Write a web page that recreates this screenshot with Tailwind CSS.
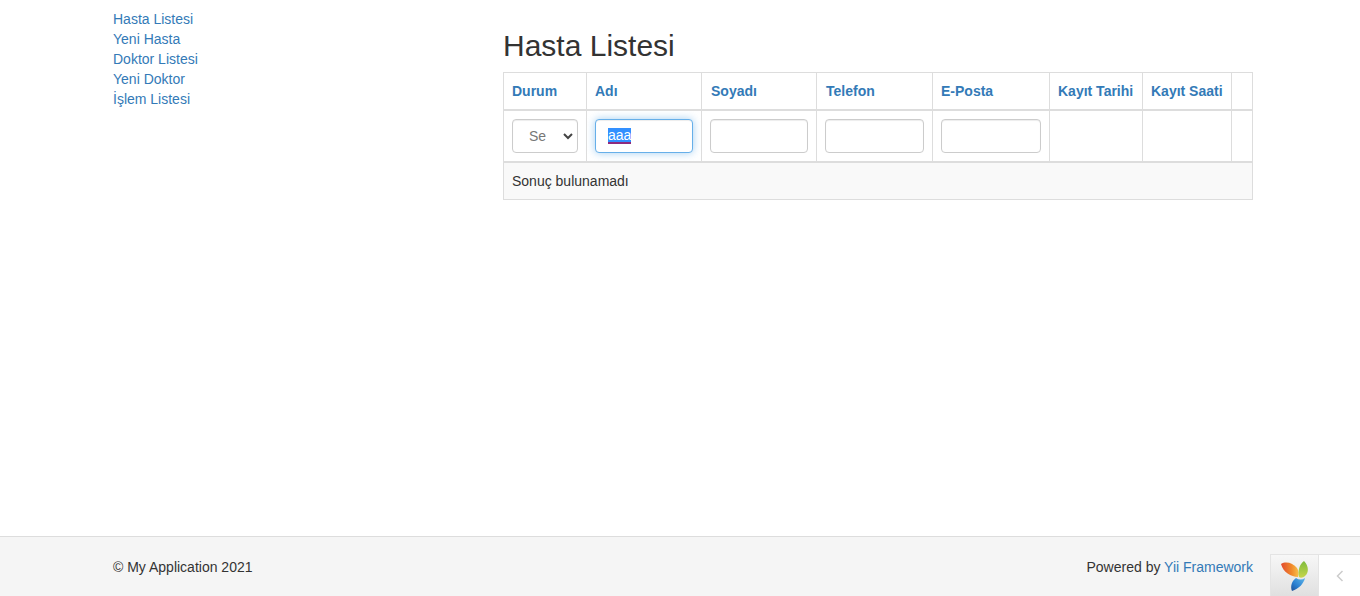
<!DOCTYPE html>
<html lang="tr">
<head>
<meta charset="utf-8">
<title>Hasta Listesi</title>
<script src="https://cdn.jsdelivr.net/npm/@tailwindcss/browser@4"></script>
</head>
<body class="h-[596px] w-[1360px] overflow-hidden flex flex-col bg-white font-['Liberation_Sans',Arial,sans-serif] text-[14px] leading-[20px] text-[#333]">
<main class="flex-1 flex pl-[113px] pr-[107px]">
  <nav class="w-[390px] shrink-0 pt-[9px] flex flex-col items-start text-[#337ab7]">
    <a href="#">Hasta Listesi</a>
    <a href="#">Yeni Hasta</a>
    <a href="#">Doktor Listesi</a>
    <a href="#">Yeni Doktor</a>
    <a href="#">İşlem Listesi</a>
  </nav>
  <section class="w-[750px]">
    <h1 class="text-[30px] leading-[33px] font-normal text-[#333] mt-[29px] mb-[10px] h-[33px]">Hasta Listesi</h1>
    <table class="w-[749px] table-fixed border-collapse border border-[#ddd]">
      <colgroup>
        <col class="w-[83px]"><col class="w-[115px]"><col class="w-[115px]"><col class="w-[116px]"><col class="w-[117px]"><col class="w-[93px]"><col class="w-[89px]"><col class="w-[21px]">
      </colgroup>
      <thead>
        <tr class="h-[37px] text-left font-bold text-[#337ab7]">
          <th class="border border-b-2 border-[#ddd] px-2 font-bold whitespace-nowrap">Durum</th>
          <th class="border border-b-2 border-[#ddd] px-2 font-bold whitespace-nowrap">Adı</th>
          <th class="border border-b-2 border-[#ddd] pl-[9px] pr-2 font-bold whitespace-nowrap">Soyadı</th>
          <th class="border border-b-2 border-[#ddd] pl-[9px] pr-2 font-bold whitespace-nowrap">Telefon</th>
          <th class="border border-b-2 border-[#ddd] px-2 font-bold whitespace-nowrap">E-Posta</th>
          <th class="border border-b-2 border-[#ddd] px-2 font-bold whitespace-nowrap">Kayıt Tarihi</th>
          <th class="border border-b-2 border-[#ddd] px-2 font-bold whitespace-nowrap">Kayıt Saati</th>
          <th class="border border-b-2 border-[#ddd] px-2"></th>
        </tr>
      </thead>
      <tbody>
        <tr class="h-[52px]">
          <td class="border border-b-2 border-[#ddd] px-2">
            <div class="relative w-[66px] h-[34px] rounded border border-[#ccc] bg-white text-[#777] flex items-center pl-[16px] shadow-[inset_0_1px_1px_rgba(0,0,0,0.075)] overflow-hidden">
              <span>Se</span>
              <svg class="absolute right-[4px] top-[13px] w-[10px] h-[7px]" viewBox="0 0 10 7" fill="none" stroke="#444" stroke-width="2"><path d="M1 1l4 4 4-4"/></svg>
            </div>
          </td>
          <td class="border border-b-2 border-[#ddd] px-2">
            <div class="w-[98px] h-[34px] rounded border border-[#66afe9] bg-white text-[#555] flex items-center pl-[12px] shadow-[inset_0_1px_1px_rgba(0,0,0,0.075),0_0_8px_rgba(102,175,233,0.6)]">
              <span class="bg-[#3390ff] text-white leading-[14px] border-b-2 border-[#8e2a7d]">aaa</span>
            </div>
          </td>
          <td class="border border-b-2 border-[#ddd] px-2">
            <div class="w-[98px] h-[34px] rounded border border-[#ccc] bg-white shadow-[inset_0_1px_1px_rgba(0,0,0,0.075)]"></div>
          </td>
          <td class="border border-b-2 border-[#ddd] px-2">
            <div class="w-[99px] h-[34px] rounded border border-[#ccc] bg-white shadow-[inset_0_1px_1px_rgba(0,0,0,0.075)]"></div>
          </td>
          <td class="border border-b-2 border-[#ddd] px-2">
            <div class="w-[100px] h-[34px] rounded border border-[#ccc] bg-white shadow-[inset_0_1px_1px_rgba(0,0,0,0.075)]"></div>
          </td>
          <td class="border border-b-2 border-[#ddd] px-2"></td>
          <td class="border border-b-2 border-[#ddd] px-2"></td>
          <td class="border border-b-2 border-[#ddd] px-2"></td>
        </tr>
        <tr class="h-[38px] bg-[#f9f9f9]">
          <td colspan="8" class="border border-[#ddd] px-2">Sonuç bulunamadı</td>
        </tr>
      </tbody>
    </table>
  </section>
</main>
<footer class="relative h-[60px] shrink-0 border-t border-[#ddd] bg-[#f5f5f5] pl-[113px] pr-[107px] flex items-center justify-between">
  <span>© My Application 2021</span>
  <span>Powered by <a href="#" class="text-[#337ab7]">Yii Framework</a></span>
  <div class="absolute right-0 bottom-0 w-[90px] h-[42px] flex bg-white border-t border-l border-[#e4e4e4]">
    <div class="w-[48px] flex items-center justify-center border-r border-[#e4e4e4] bg-gradient-to-b from-[#f7f7f7] to-[#e0e0e0]">
      <svg class="w-[30px] h-[32px]" viewBox="0 0 30 32">
        <defs>
          <linearGradient id="o" x1="0" y1="0" x2="1" y2="0"><stop offset="0" stop-color="#e2492f"/><stop offset="0.6" stop-color="#f08a2c"/><stop offset="1" stop-color="#f7c04a"/></linearGradient>
          <linearGradient id="g" x1="0" y1="0" x2="0" y2="1"><stop offset="0" stop-color="#7dbb3c"/><stop offset="1" stop-color="#c6d64a"/></linearGradient>
          <linearGradient id="b" x1="1" y1="0" x2="0" y2="1"><stop offset="0" stop-color="#5fb7ea"/><stop offset="0.6" stop-color="#2a7fd0"/><stop offset="1" stop-color="#1d4f96"/></linearGradient>
        </defs>
        <path d="M1 4C6 1 13 3 17 8C19 11 19 14 18 17C11 17 3 12 1 4z" fill="url(#o)"/>
        <path d="M24 1C29 6 29 13 25 16C23 18 20 18 19 17C18 10 19 5 24 1z" fill="url(#g)"/>
        <path d="M16 18C19 20 22 20 25 18C24 23 19 29 12 31C10 26 12 21 16 18z" fill="url(#b)"/>
      </svg>
    </div>
    <div class="flex-1 flex items-center justify-center">
      <svg class="w-[8px] h-[12px]" viewBox="0 0 8 12" fill="none" stroke="#ccc" stroke-width="1.5"><path d="M6.5 1L1.5 6l5 5"/></svg>
    </div>
  </div>
</footer>
</body>
</html>
